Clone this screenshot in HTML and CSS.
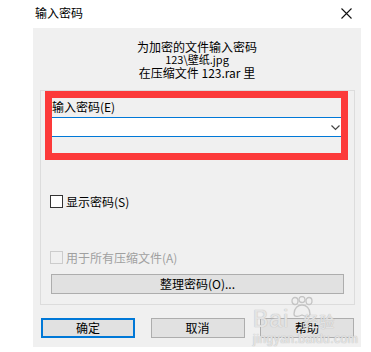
FILE: index.html
```html
<!DOCTYPE html>
<html lang="zh-CN">
<head>
    <meta charset="UTF-8">
    <title>输入密码</title>
    <link rel="stylesheet" href="styles.css">
</head>
<body>

    <div class="window">
        <div class="titlebar">
            <span class="title">输入密码</span>
            <svg class="close" width="11" height="11" viewBox="0 0 11 11">
                <path d="M0.5 0.5 L10.5 10.5 M10.5 0.5 L0.5 10.5" stroke="#111" stroke-width="1.1" fill="none"/>
            </svg>
        </div>

        <div class="client">
            <div class="info">
                <div>为加密的文件输入密码</div>
                <div class="file">123\壁纸.jpg</div>
                <div>在压缩文件 123.rar 里</div>
            </div>

            <div class="group">
                <div class="mark">
                    <div class="field-label">输入密码(E)</div>
                    <div class="combo">
                        <svg class="arrow" width="9" height="6" viewBox="0 0 9 6">
                            <path d="M0.5 0.5 L4.5 4.5 L8.5 0.5" stroke="#444" stroke-width="1.2" fill="none"/>
                        </svg>
                    </div>
                </div>

                <label class="check">
                    <span class="box"></span>显示密码(S)
                </label>

                <label class="check disabled">
                    <span class="box"></span>用于所有压缩文件(A)
                </label>

                <button class="btn wide">整理密码(O)...</button>
            </div>

            <div class="actions">
                <button class="btn default">确定</button>
                <button class="btn">取消</button>
                <button class="btn">帮助</button>
            </div>

            <div class="watermark">
                <svg class="paw" width="26" height="22" viewBox="0 0 26 22">
                    <g fill="none" stroke="#c4c4c4" stroke-width="1.3">
                        <ellipse cx="6" cy="5" rx="3" ry="3.5"/>
                        <ellipse cx="13" cy="3.5" rx="3" ry="3"/>
                        <ellipse cx="20" cy="5" rx="3" ry="3.5"/>
                        <path d="M5 18 C5 12 9 9 13 9 C17 9 21 12 21 18 C21 21 17 21 13 19 C9 21 5 21 5 18 Z"/>
                    </g>
                </svg>
                <span class="wm-logo">Bai<span class="wm-cn">经验</span></span>
                <span class="wm-url">jingyan.baidu.com</span>
            </div>
        </div>
    </div>

</body>
</html>
```

FILE: styles.css
```css
body {
    margin: 0;
    background-color: #fff;
    font-family: "Noto Sans CJK SC", "Liberation Sans", sans-serif;
    font-size: 12px;
    color: #000;
}
.window {
    margin-left: 33px;
    width: 328px;
}
.titlebar {
    height: 28px;
    display: flex;
    align-items: center;
    justify-content: space-between;
    padding: 0 9px 0 2px;
    box-sizing: border-box;
}
.title {
    font-size: 12px;
    line-height: 14px;
    margin-top: -2px;
}
.close {
    margin-top: -2px;
}
.client {
    position: relative;
    background-color: #f0f0f0;
    height: 319px;
    padding-top: 12px;
    box-sizing: border-box;
}
.info {
    text-align: center;
    line-height: 13px;
}
.info .file {
    font-size: 11px;
}
.group {
    margin: 11px 0 0 7px;
    width: 315px;
    height: 215px;
    border: 1px solid #dcdcdc;
    box-sizing: border-box;
}
.mark {
    margin: 0 6px 0 4px;
    border: 7px solid #fc3a3a;
    height: 69px;
    box-sizing: border-box;
}
.field-label {
    height: 19px;
    line-height: 18px;
}
.combo {
    height: 18px;
    background-color: #fff;
    border-top: 1px solid #0078d7;
    border-bottom: 1px solid #0078d7;
    display: flex;
    align-items: center;
    justify-content: flex-end;
    padding-right: 1px;
}
.arrow {
    margin-top: 2px;
}
.check {
    display: flex;
    align-items: center;
    margin-left: 9px;
    height: 13px;
    line-height: 13px;
}
.check .box {
    width: 11px;
    height: 11px;
    border: 1px solid #333;
    background-color: #fff;
    margin-right: 3px;
}
.mark + .check {
    margin-top: 35px;
}
.check.disabled {
    margin-top: 43px;
    color: #a0a0a0;
}
.check.disabled .box {
    border-color: #cccccc;
    background-color: #f0f0f0;
}
.btn {
    font-family: inherit;
    font-size: 12px;
    height: 20px;
    padding: 0;
    background-color: #e1e1e1;
    border: 1px solid #adadad;
    color: #000;
    line-height: 16px;
}
.btn.wide {
    display: block;
    margin: 10px 0 0 10px;
    width: 293px;
}
.actions {
    display: flex;
    justify-content: space-between;
    margin: 13px 7px 0 8px;
}
.actions .btn {
    width: 94px;
}
.btn.default {
    border: 2px solid #0078d7;
}
.watermark {
    position: absolute;
    left: 220px;
    top: 268px;
    width: 95px;
    display: flex;
    flex-direction: column;
    color: rgba(255, 255, 255, 0.6);
    text-shadow: 0 0 1px #bdbdbd, 0 0 1px #bdbdbd;
    pointer-events: none;
}
.paw {
    margin-left: 36px;
    margin-bottom: -10px;
}
.wm-logo {
    font-family: "Liberation Sans", sans-serif;
    font-size: 23px;
    line-height: 22px;
    letter-spacing: 1px;
}
.wm-cn {
    font-family: "Noto Sans CJK SC", sans-serif;
    font-size: 15px;
    margin-left: 14px;
}
.wm-url {
    font-family: "Liberation Sans", sans-serif;
    font-size: 12px;
    line-height: 14px;
    letter-spacing: 0.5px;
}
```
